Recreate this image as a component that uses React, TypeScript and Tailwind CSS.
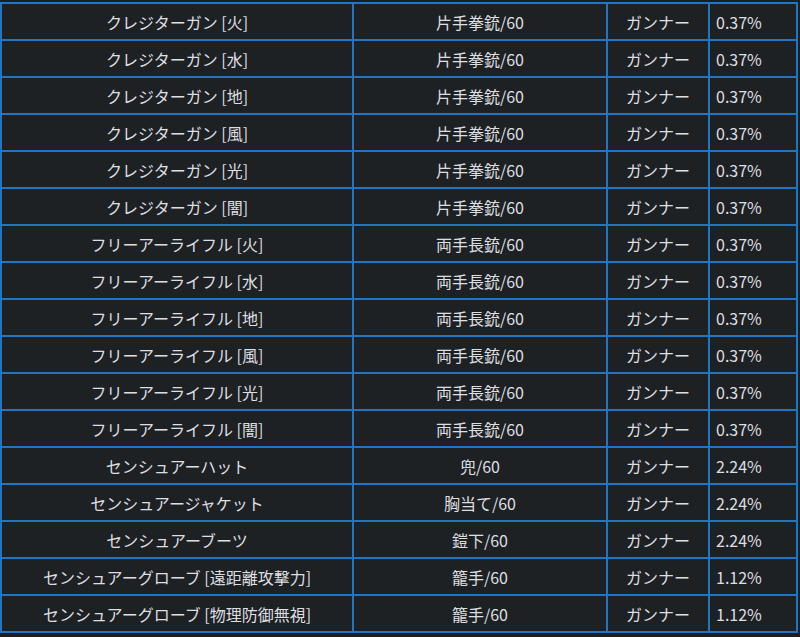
const rows: [string, string, string, string][] = [
  ["クレジターガン [火]", "片手拳銃/60", "ガンナー", "0.37%"],
  ["クレジターガン [水]", "片手拳銃/60", "ガンナー", "0.37%"],
  ["クレジターガン [地]", "片手拳銃/60", "ガンナー", "0.37%"],
  ["クレジターガン [風]", "片手拳銃/60", "ガンナー", "0.37%"],
  ["クレジターガン [光]", "片手拳銃/60", "ガンナー", "0.37%"],
  ["クレジターガン [闇]", "片手拳銃/60", "ガンナー", "0.37%"],
  ["フリーアーライフル [火]", "両手長銃/60", "ガンナー", "0.37%"],
  ["フリーアーライフル [水]", "両手長銃/60", "ガンナー", "0.37%"],
  ["フリーアーライフル [地]", "両手長銃/60", "ガンナー", "0.37%"],
  ["フリーアーライフル [風]", "両手長銃/60", "ガンナー", "0.37%"],
  ["フリーアーライフル [光]", "両手長銃/60", "ガンナー", "0.37%"],
  ["フリーアーライフル [闇]", "両手長銃/60", "ガンナー", "0.37%"],
  ["センシュアーハット", "兜/60", "ガンナー", "2.24%"],
  ["センシュアージャケット", "胸当て/60", "ガンナー", "2.24%"],
  ["センシュアーブーツ", "鎧下/60", "ガンナー", "2.24%"],
  ["センシュアーグローブ [遠距離攻撃力]", "籠手/60", "ガンナー", "1.12%"],
  ["センシュアーグローブ [物理防御無視]", "籠手/60", "ガンナー", "1.12%"],
];

export default function App() {
  return (
    <div
      className="w-[800px] h-[637px] overflow-hidden bg-[#1c1f22] pt-[2px]"
      style={{ fontFamily: '"Noto Sans CJK JP", "Noto Sans", sans-serif' }}
    >
      <div className="grid w-[798px] grid-cols-[350px_252px_100px_1fr] gap-[2px] border-2 border-[#2176c2] bg-[#2176c2]">
        {rows.map((r, i) => (
          <div key={i} className="contents text-[16px] text-[#dedfe0]">
            <div className="flex h-[35px] items-center justify-center bg-[#1e2124]">{r[0]}</div>
            <div className="flex h-[35px] items-center justify-center bg-[#1e2124]">{r[1]}</div>
            <div className="flex h-[35px] items-center justify-center bg-[#1e2124]">{r[2]}</div>
            <div className="flex h-[35px] items-center bg-[#1e2124] pl-[6px]">{r[3]}</div>
          </div>
        ))}
      </div>
    </div>
  );
}
